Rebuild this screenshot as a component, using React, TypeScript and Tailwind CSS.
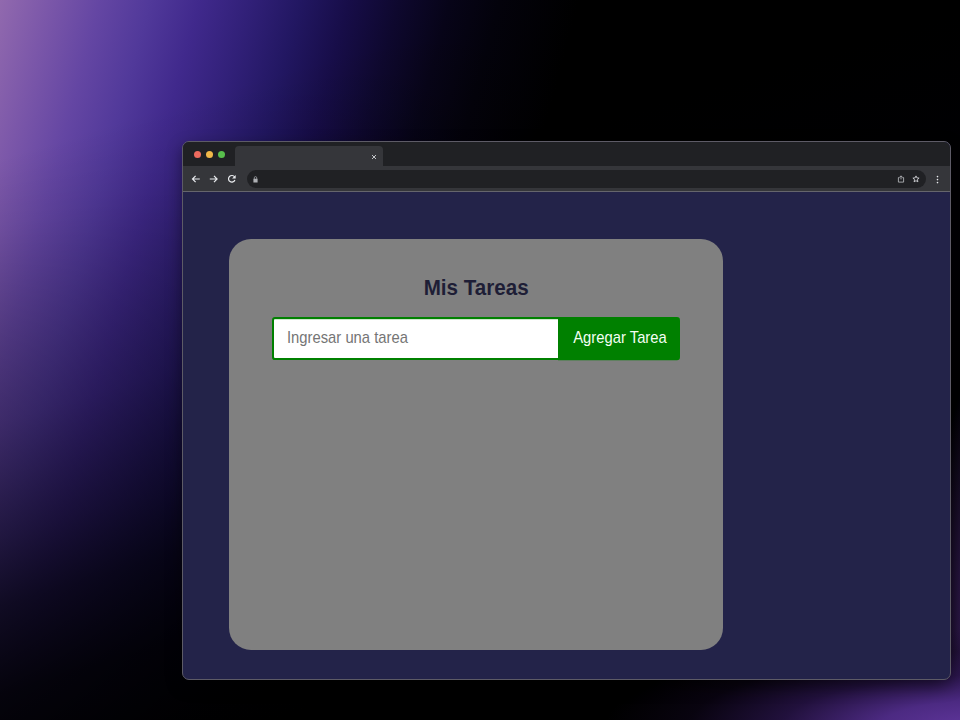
import React from "react";

const wallpaper: React.CSSProperties = {
  background: [
    "radial-gradient(ellipse 380px 98px at 985px 728px, #62379f 0%, #4c2a82 28%, rgba(44,22,80,.75) 54%, rgba(24,10,44,.35) 78%, rgba(0,0,0,0) 100%)",
    "radial-gradient(ellipse 55px 290px at 985px 650px, #5b3290 0%, rgba(60,32,98,.7) 45%, rgba(0,0,0,0) 100%)",
    "linear-gradient(163deg, rgba(0,0,0,0) 150px, rgba(0,0,0,.07) 220px, rgba(0,0,0,.18) 290px, rgba(1,0,6,.36) 404px, rgba(1,0,6,.48) 456px, rgba(1,0,6,.62) 515px, rgba(0,0,4,.79) 580px, rgba(0,0,2,.93) 665px, #000 770px)",
    "linear-gradient(105deg, #9169ae 0px, #7b57a9 48px, #6446a3 97px, #51399a 145px, #40298c 193px, #312078 242px, #221762 290px, #170d48 338px, #0e082e 386px, #070418 435px, #03020b 483px, #000 560px)",
  ].join(", "),
};

function TrafficLights() {
  return (
    <div className="flex gap-[5px] pl-[11px] pt-[9px]">
      <i className="h-[7px] w-[7px] rounded-full bg-[#ed6a5e]" />
      <i className="h-[7px] w-[7px] rounded-full bg-[#f0b849]" />
      <i className="h-[7px] w-[7px] rounded-full bg-[#58bf4c]" />
    </div>
  );
}

function Toolbar() {
  return (
    <div className="flex h-[26px] items-center border-b border-[#65656c] bg-[#35363a] text-[#e8eaed]">
      <svg className="ml-2 h-[10px] w-[10px]" viewBox="0 0 10 10" fill="none" stroke="currentColor" strokeWidth="1.2">
        <path d="M8.8 5H1.5M4.6 1.8 1.5 5 4.6 8.2" />
      </svg>
      <svg className="ml-2 h-[10px] w-[10px]" viewBox="0 0 10 10" fill="none" stroke="currentColor" strokeWidth="1.2">
        <path d="M.8 5h7.3M5 1.8 8.1 5 5 8.2" />
      </svg>
      <svg className="ml-[8px] h-[10px] w-[10px]" viewBox="0 0 10 10" fill="none" stroke="currentColor" strokeWidth="1.2">
        <path d="M7.6 3A3.3 3.3 0 1 0 7.9 6" />
        <path d="M8.7 .9v3.6H5.1Z" fill="currentColor" stroke="none" />
      </svg>
      <div className="ml-[10px] flex h-[18px] w-[679px] items-center rounded-full bg-[#202124] pl-[6px] pr-[6px]">
        <svg className="mt-px h-[7px] w-[5px] text-[#aeb0b4]" viewBox="0 0 5 7">
          <path d="M.4 2.8h4.2v3.7H.4z" fill="currentColor" />
          <path d="M1.3 3V1.8a1.2 1.2 0 0 1 2.4 0V3" fill="none" stroke="currentColor" strokeWidth=".7" />
        </svg>
        <svg className="ml-auto h-2 w-2 text-[#c2c4c8]" viewBox="0 0 8 8" fill="none" stroke="currentColor" strokeWidth=".8">
          <path d="M2.7 2.6H1.4v4.5h5.2V2.6H5.3M4 4.4V1M2.8 2 4 .8 5.2 2" />
        </svg>
        <svg className="ml-[7px] h-2 w-2 text-[#d2d4d8]" viewBox="0 0 8 8" fill="none" stroke="currentColor" strokeWidth=".9">
          <path d="m4 .9.9 2 2.2.2-1.7 1.5.5 2.2L4 5.7 2.1 6.8l.5-2.2L.9 3.1l2.2-.2Z" />
        </svg>
      </div>
      <svg className="ml-[7px] mt-px h-[9px] w-[9px]" viewBox="0 0 9 9" fill="currentColor">
        <circle cx="4.5" cy="1.6" r=".8" />
        <circle cx="4.5" cy="4.6" r=".8" />
        <circle cx="4.5" cy="7.6" r=".8" />
      </svg>
    </div>
  );
}

export default function App() {
  return (
    <div className="h-[720px] w-[960px] overflow-hidden pl-[182px] pt-[141px] font-['Liberation_Sans',sans-serif]" style={wallpaper}>
      <div className="flex h-[538.5px] w-[768.5px] flex-col overflow-hidden rounded-[7px] border border-[#5d5b66] bg-[#232349] shadow-[0_6px_16px_rgba(0,0,0,0.4)]">
        <div className="flex h-6 bg-[#202124]">
          <div className="w-[52px]">
            <TrafficLights />
          </div>
          <div className="mt-1 flex h-5 w-[148px] items-center justify-end rounded-t-[4px] bg-[#35363a] pr-[6px] pt-[2px]">
            <svg className="h-[6px] w-[6px] text-[#d0d2d6]" viewBox="0 0 6 6" stroke="currentColor" strokeWidth=".9">
              <path d="m1 1 4 4M5 1 1 5" />
            </svg>
          </div>
        </div>
        <Toolbar />
        <main className="pl-[46.4px] pt-[47px]">
          <section className="h-[411.4px] w-[493.6px] rounded-[22px] bg-[#808080] px-[43px] pt-[37px]">
            <h1 className="scale-y-[1.05] text-center text-[20.6px] leading-6 font-bold text-[#1e1e36]">Mis Tareas</h1>
            <form className="mt-[17px] -ml-[0.4px] flex h-[40px] w-[408px] origin-top scale-y-[1.08]">
              <input
                className="w-[286px] rounded-l-[3px] border-2 border-r-0 border-[#008000] bg-white pl-[13px] pb-px text-[14.8px] outline-none placeholder:text-[#757575]"
                placeholder="Ingresar una tarea"
              />
              <button type="button" className="flex-1 rounded-r-[3px] bg-[#008000] pl-[2px] pb-px text-[14.8px] whitespace-nowrap text-[#f4fff4]">
                Agregar Tarea
              </button>
            </form>
          </section>
        </main>
      </div>
    </div>
  );
}
